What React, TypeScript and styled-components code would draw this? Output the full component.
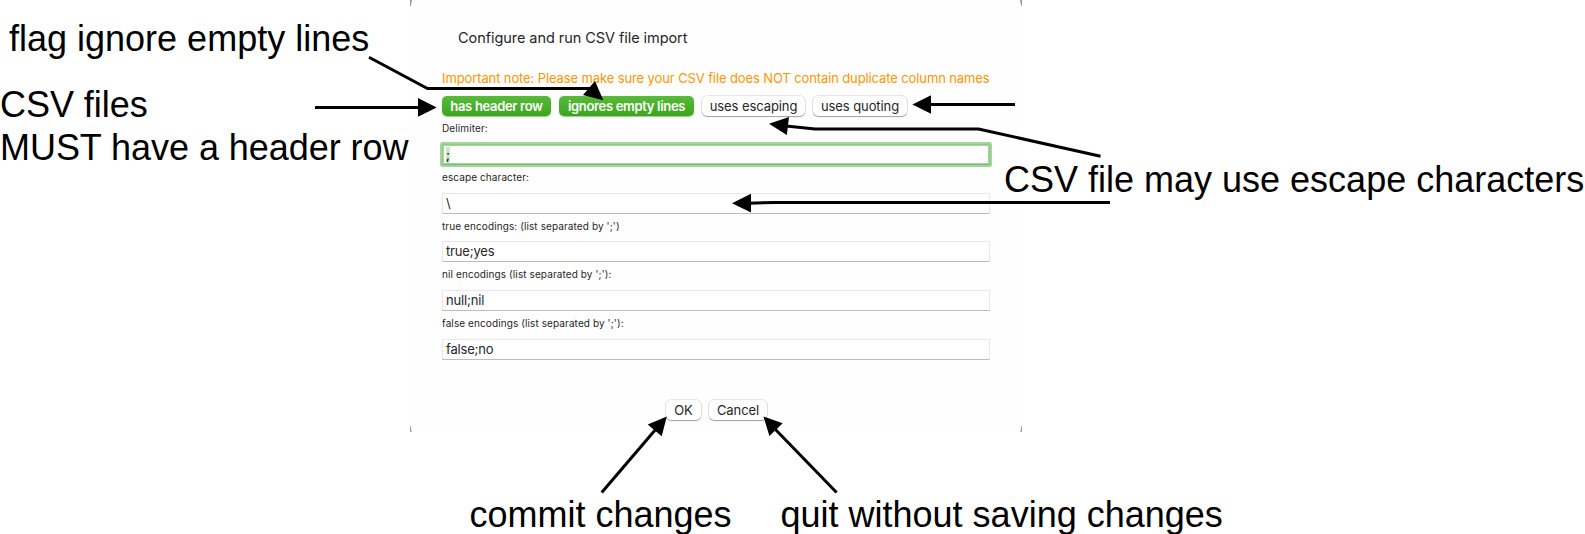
import React from 'react';
import styled, { createGlobalStyle, css } from 'styled-components';

const GlobalStyle = createGlobalStyle`
  *, *::before, *::after { box-sizing: border-box; }
  body { margin: 0; background: #fff; overflow: hidden; }
`;

const Page = styled.main`
  position: relative;
  width: 1585px;
  height: 534px;
  overflow: hidden;
  background: #fff;
`;

const Dialog = styled.section`
  display: flex;
  flex-direction: column;
  width: 612px;
  height: 432px;
  margin-left: 410px;
  padding: 28px 32px 12.5px;
  background: #fefefe;
  color: #262626;
  font-family: Inter, 'Liberation Sans', sans-serif;
  font-size: 13px;
`;

const Title = styled.h1`
  margin: 0 0 22px;
  padding-left: 16px;
  font-size: 14.5px;
  font-weight: 400;
  line-height: 20px;
  letter-spacing: -0.06px;
  white-space: nowrap;
`;

const Note = styled.p`
  margin: 0 0 10px;
  color: #ff9500;
  line-height: 16px;
  letter-spacing: -0.112px;
  white-space: nowrap;
`;

const ButtonRow = styled.div<{ $centered?: boolean }>`
  display: flex;
  gap: 8px;
  ${(p) => p.$centered && css`
    justify-content: center;
    margin-top: auto;
    padding-left: 1px;
  `}
`;

const Button = styled.button<{ $on?: boolean; $width: number }>`
  flex: none;
  width: ${(p) => p.$width}px;
  height: 20px;
  padding: 0;
  border: 0;
  border-radius: 5px;
  font: inherit;
  line-height: 18px;
  white-space: nowrap;
  color: #262626;
  letter-spacing: -0.08px;
  background: #fff;
  box-shadow: 0 0 0 0.7px rgba(0, 0, 0, 0.13), 0 1px 1px rgba(0, 0, 0, 0.3);
  ${(p) => p.$on && css`
    color: #fff;
    font-weight: 600;
    letter-spacing: -0.32px;
    background: linear-gradient(#58bb3a, #3ba51c);
    box-shadow: 0 0.5px 1px rgba(40, 130, 20, 0.45);
  `}
`;

const Fields = styled.div`
  display: flex;
  flex-direction: column;
  margin-top: 6px;
`;

const Field = styled.label`
  display: flex;
  flex-direction: column;
  height: 48.7px;
`;

const Caption = styled.span`
  height: 22px;
  padding-top: 0.3px;
  font-size: 10px;
  line-height: 13px;
  letter-spacing: 0.1px;
  white-space: nowrap;
`;

const Input = styled.input`
  width: 548px;
  height: 21px;
  flex: none;
  padding: 0 3px 1px;
  border: 1px solid #e8e8e8;
  border-bottom-color: #bcbcbc;
  border-radius: 0;
  background: #fff;
  color: #262626;
  font: inherit;
  letter-spacing: -0.18px;
  outline: none;
`;

const FocusedInput = styled.div`
  display: flex;
  align-items: center;
  width: 548px;
  height: 21px;
  padding-left: 3px;
  border: 1px solid #93c98b;
  border-bottom-color: #82b57a;
  background: #fff;
  box-shadow: 0 0 0 2px #a3d49b, inset 0 0 0 1px #a3d49b;
  border-radius: 1px;
`;

const Selection = styled.mark`
  width: 4px;
  height: 16px;
  line-height: 16px;
  background: #cbe8c5;
  color: #000;
`;

const Annotation = styled.p<{ $x: number; $y: number; $spacing?: number }>`
  position: absolute;
  left: ${(p) => p.$x}px;
  top: ${(p) => p.$y}px;
  margin: 0;
  color: #000;
  font: 36px/43px 'Liberation Sans', Helvetica, sans-serif;
  letter-spacing: ${(p) => p.$spacing ?? 0}px;
  white-space: pre;
`;

const Arrows = styled.svg`
  position: absolute;
  inset: 0;
  pointer-events: none;
`;

const arrows = [
  { line: '369,57.3 427.5,88.5 590,88.5', head: '603.3,100.3 595,81 583,95' },
  { line: '315,107.4 420,107.4', head: '436.7,107.4 418,98 418,116.8' },
  { line: '1015,104.5 929,104.5', head: '912.4,104.5 931,95.2 931,113.8' },
  { line: '1100.5,156.2 978.5,129 815,129 786,126', head: '769,123.8 789,117 786.8,135' },
  { line: '1110,202.4 775,202.4 749,203.2', head: '732,203.3 751,193.7 751,212.4' },
  { line: '601.7,492.5 656,429', head: '666.8,416.5 647.7,424.4 661.7,436.2' },
  { line: '836.6,492.5 775,429', head: '763.5,416.5 782.7,423.3 769.4,436' },
];

const fields = [
  { caption: 'escape character:', value: '\\' },
  { caption: "true encodings: (list separated by ';')", value: 'true;yes' },
  { caption: "nil encodings (list separated by ';'):", value: 'null;nil' },
  { caption: "false encodings (list separated by ';'):", value: 'false;no' },
];

export default function App() {
  return (
    <Page>
      <GlobalStyle />
      <Dialog>
        <Title>Configure and run CSV file import</Title>
        <Note>Important note: Please make sure your CSV file does NOT contain duplicate column names</Note>
        <ButtonRow>
          <Button $on $width={109}>has header row</Button>
          <Button $on $width={135}>ignores empty lines</Button>
          <Button $width={103}>uses escaping</Button>
          <Button $width={94}>uses quoting</Button>
        </ButtonRow>
        <Fields>
          <Field as="div">
            <Caption>Delimiter:</Caption>
            <FocusedInput><Selection>;</Selection></FocusedInput>
          </Field>
          {fields.map((f) => (
            <Field key={f.caption}>
              <Caption>{f.caption}</Caption>
              <Input readOnly value={f.value} />
            </Field>
          ))}
        </Fields>
        <ButtonRow $centered>
          <Button $width={35}>OK</Button>
          <Button $width={58}>Cancel</Button>
        </ButtonRow>
      </Dialog>

      <Annotation $x={9} $y={17}>flag ignore empty lines</Annotation>
      <Annotation $x={0} $y={83} $spacing={-0.05}>{'CSV files\nMUST have a header row'}</Annotation>
      <Annotation $x={1004} $y={158}>CSV file may use escape characters</Annotation>
      <Annotation $x={469.5} $y={493}>commit changes</Annotation>
      <Annotation $x={780.5} $y={493}>quit without saving changes</Annotation>

      <Arrows width="1585" height="534" viewBox="0 0 1585 534">
        <g fill="#999">
          <path d="M410 0h2l-1.2 6h-.8z" />
          <path d="M1020 0h2v6h-.8z" />
          <path d="M410 426h.7l.5 4.8h.8v1h-2z" />
          <path d="M1022 426h-.7l-.5 4.8h-.8v1h2z" />
        </g>
        {arrows.map((a) => (
          <g key={a.head}>
            <polyline points={a.line} fill="none" stroke="#000" strokeWidth="3" />
            <polygon points={a.head} fill="#000" />
          </g>
        ))}
      </Arrows>
    </Page>
  );
}
